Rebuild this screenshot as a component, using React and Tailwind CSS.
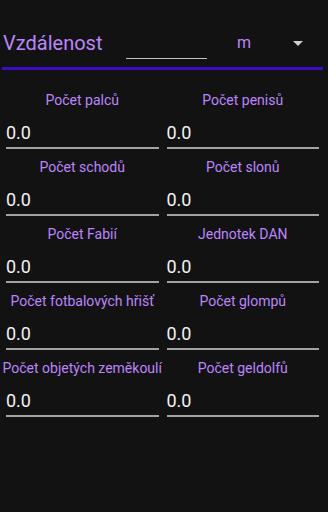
import React from "react";

const units = [
  "Počet palců",
  "Počet penisů",
  "Počet schodů",
  "Počet slonů",
  "Počet Fabií",
  "Jednotek DAN",
  "Počet fotbalových hřišť",
  "Počet glompů",
  "Počet objetých zeměkoulí",
  "Počet geldolfů",
];

function UnitField({ label }) {
  return (
    <div className="flex flex-col items-center min-w-0">
      <span className="text-[14px] leading-[20px] text-[#bb86fc] whitespace-nowrap">
        {label}
      </span>
      <div className="mt-[11px] w-full pb-[2px] border-b-2 border-[#a3a3a3] text-[18px] leading-[24px] text-[#f2f2f2]">
        0.0
      </div>
    </div>
  );
}

export default function App() {
  return (
    <div className="w-full h-[512px] bg-[#121212] font-[Roboto,sans-serif] overflow-hidden">
      {/* Header: distance input + unit select */}
      <div className="flex items-start h-[70px] ml-[2px] mr-[5px] border-b-[3px] border-[#3a0cc2]">
        <span className="mt-[31px] ml-[1px] w-[123px] text-[20px] leading-[24px] text-[#bb86fc]">
          Vzdálenost
        </span>
        <div className="mt-[34px] w-[81px] h-[25px] border-b border-[#c4c4c4]"></div>
        <div className="flex items-start ml-[30px]">
          <span className="mt-[33px] w-[56px] text-[16px] leading-[20px] text-[#bb86fc]">
            m
          </span>
          <svg width="10" height="5" viewBox="0 0 10 5" className="mt-[41px]">
            <path d="M0 0 L10 0 L5 5 Z" fill="#cfcfcf" />
          </svg>
        </div>
      </div>

      {/* Converted values */}
      <div className="grid grid-cols-2 gap-2 pl-[6px] pr-[9px] pt-[20px]">
        {units.map((u) => (
          <UnitField key={u} label={u} />
        ))}
      </div>
    </div>
  );
}
